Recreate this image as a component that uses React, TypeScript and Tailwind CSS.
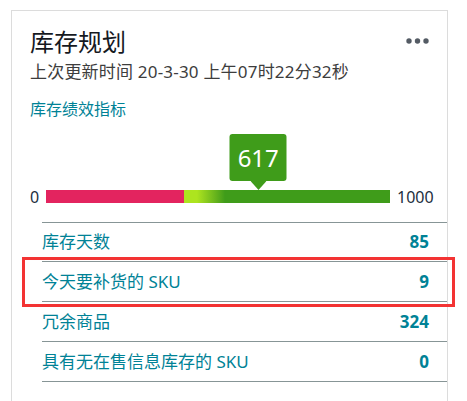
import React from "react";

const rows = [
  { label: "库存天数", value: "85" },
  { label: "今天要补货的 SKU", value: "9" },
  { label: "冗余商品", value: "324" },
  { label: "具有无在售信息库存的 SKU", value: "0" },
];

export default function App() {
  return (
    <div
      className="relative w-[467px] h-[401px] overflow-hidden bg-white"
      style={{ fontFamily: '"Noto Sans", "Noto Sans CJK SC", sans-serif' }}
    >
      <div className="ml-[11px] mt-[10px] w-[437px] h-[420px] border border-[#dcdcdc] pl-[18px] pr-[17px] pt-[17px]">
        <div className="flex items-center justify-between">
          <div className="text-[24px] leading-[28px] text-[#16191f]">库存规划</div>
          <svg width="23" height="6" viewBox="0 0 23 6" className="mr-[1px] -mt-[3px]">
            <circle cx="3" cy="3" r="2.7" fill="#545b64" />
            <circle cx="11.5" cy="3" r="2.7" fill="#545b64" />
            <circle cx="20" cy="3" r="2.7" fill="#545b64" />
          </svg>
        </div>
        <div className="mt-[5px] text-[17px] leading-[22px] text-[#3d3d3d] whitespace-nowrap tracking-[0.2px]">
          上次更新时间 20-3-30 上午07时22分32秒
        </div>
        <div className="mt-[16px] text-[16px] leading-[20px] text-[#008296]">库存绩效指标</div>

        <div className="mt-[71px] flex items-center h-[13px] -mr-[17px]">
          <span className="w-[16px] shrink-0 text-[16px] leading-none text-[#232f3e]">0</span>
          <div className="relative shrink-0 w-[344px] h-[13px] flex">
            <div className="w-[138px] h-full bg-[#e3245f]" />
            <div className="w-[13px] h-full bg-[#ade41f]" />
            <div className="w-[28px] h-full bg-gradient-to-r from-[#ade41f] to-[#3f9c1a]" />
            <div className="flex-1 h-full bg-[#3f9c1a]" />
            <div className="absolute top-[-56px] left-[61.7%] -translate-x-1/2 flex flex-col items-center">
              <div className="w-[57px] h-[47px] rounded-[3px] bg-[#3f9c1a] flex items-center justify-center text-white text-[24px] leading-none">
                617
              </div>
              <svg width="16" height="9" viewBox="0 0 16 9" className="block">
                <path d="M0 0 L16 0 L8 9 Z" fill="#3f9c1a" />
              </svg>
            </div>
          </div>
          <span className="ml-[7px] shrink-0 text-[16px] leading-none text-[#232f3e]">1000</span>
        </div>

        <div className="mt-[19px] ml-[12px] -mr-[17px] border-t border-[#879596]">
          {rows.map((r, i) => (
            <div
              key={r.label}
              className={`flex items-center justify-between border-b border-[#879596] pr-[18px] ${
                i === 0 ? "h-[39px]" : "h-[40px]"
              }`}
            >
              <span className="text-[17px] leading-[22px] text-[#008296] whitespace-nowrap">{r.label}</span>
              <span className="text-[17px] leading-[22px] font-bold text-[#008296]">{r.value}</span>
            </div>
          ))}
        </div>
      </div>

      <div className="absolute left-[22px] top-[257px] w-[433px] h-[50px] border-[3px] border-[#f33333]" />
    </div>
  );
}
